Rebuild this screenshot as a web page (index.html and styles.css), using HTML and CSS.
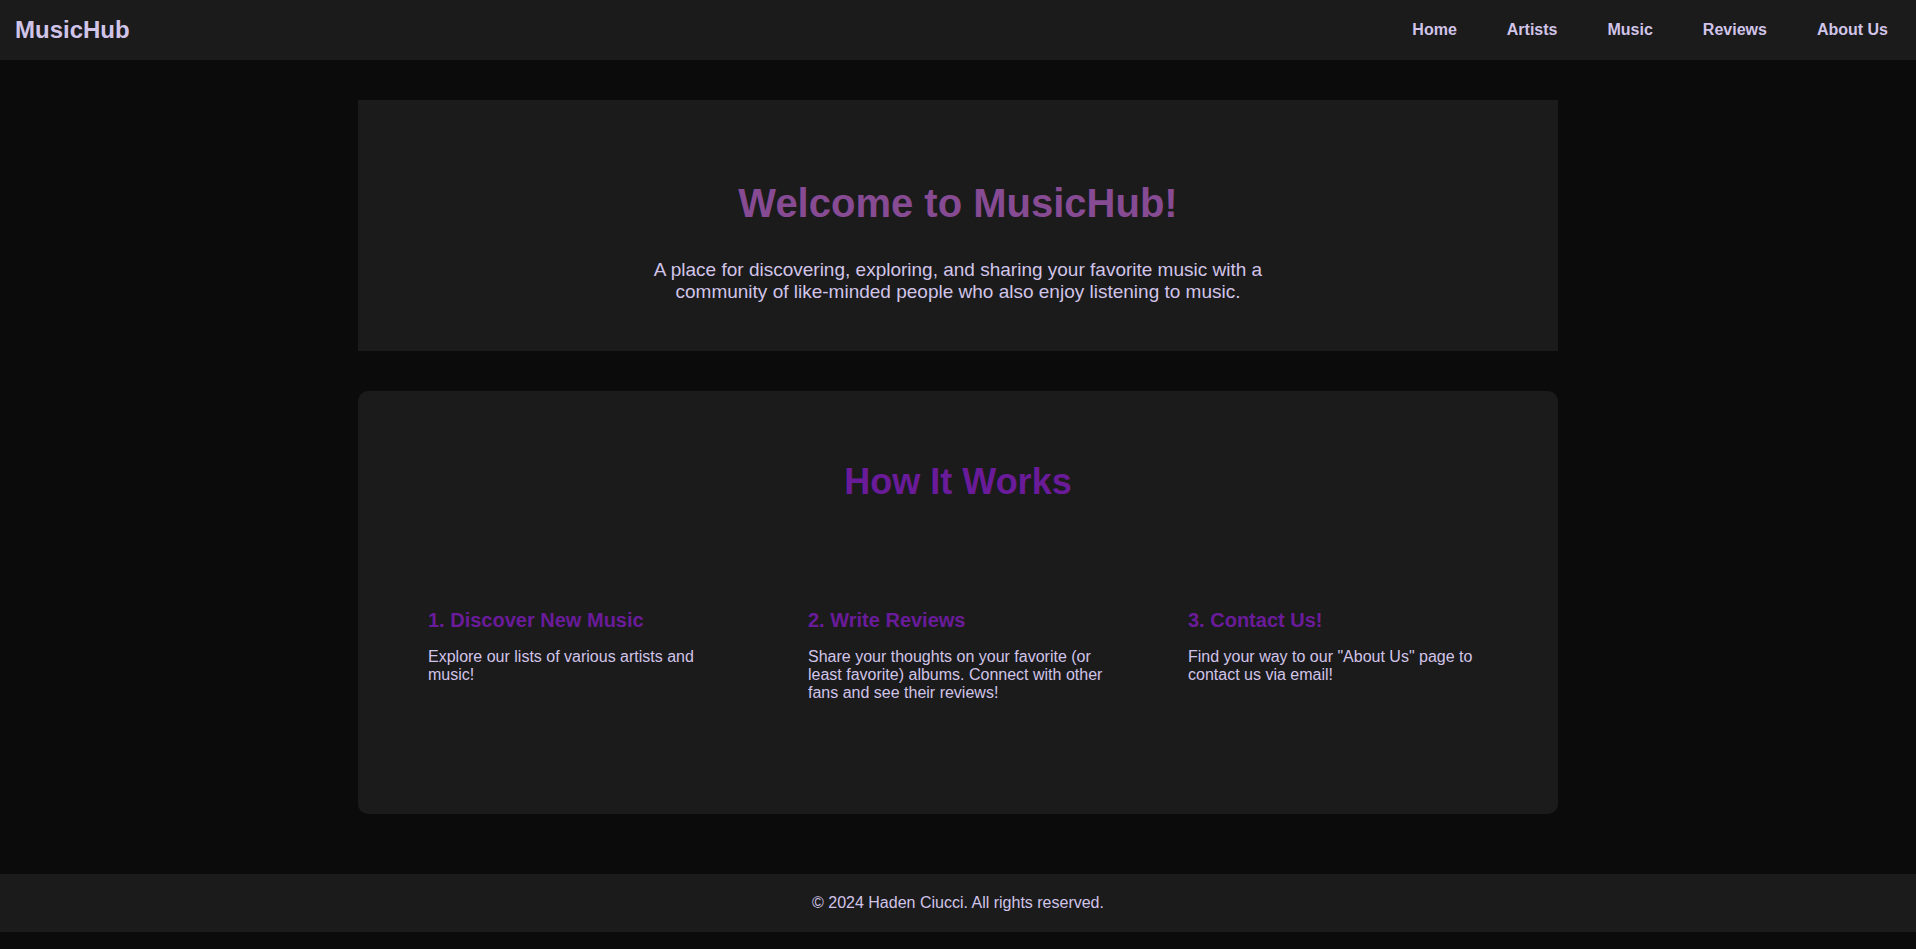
FILE: index.html
```html
<!DOCTYPE html>
<html lang="en">
<head>
<meta charset="utf-8">
<title>MusicHub</title>
<link rel="stylesheet" href="styles.css">
</head>
<body>
<header class="site-header">
  <div class="logo">MusicHub</div>
  <nav class="nav">
    <a href="#">Home</a>
    <a href="#">Artists</a>
    <a href="#">Music</a>
    <a href="#">Reviews</a>
    <a href="#">About Us</a>
  </nav>
</header>
<main class="main">
  <section class="hero">
    <h1>Welcome to MusicHub!</h1>
    <p>A place for discovering, exploring, and sharing your favorite music with a community of like-minded people who also enjoy listening to music.</p>
  </section>
  <section class="how">
    <h2>How It Works</h2>
    <div class="steps">
      <article class="step">
        <h3>1. Discover New Music</h3>
        <p>Explore our lists of various artists and music!</p>
      </article>
      <article class="step">
        <h3>2. Write Reviews</h3>
        <p>Share your thoughts on your favorite (or least favorite) albums. Connect with other fans and see their reviews!</p>
      </article>
      <article class="step">
        <h3>3. Contact Us!</h3>
        <p>Find your way to our "About Us" page to contact us via email!</p>
      </article>
    </div>
  </section>
</main>
<footer class="site-footer">
  <p>© 2024 Haden Ciucci. All rights reserved.</p>
</footer>
</body>
</html>
```
FILE: styles.css
```css
* { box-sizing: border-box; }
body {
  margin: 0;
  background: #0b0b0b;
  color: #d1c4e9;
  font-family: "Liberation Sans", Arial, sans-serif;
  font-size: 16px;
}
.site-header {
  display: flex;
  justify-content: space-between;
  align-items: center;
  padding: 16px 28px 16px 15px;
  background: #1b1b1b;
}
.logo { font-size: 24px; line-height: 28px; font-weight: bold; }
.nav { display: flex; gap: 50px; }
.nav a { color: inherit; font-weight: bold; text-decoration: none; }
.main {
  max-width: 1200px;
  margin: 40px auto 60px;
  display: flex;
  flex-direction: column;
  gap: 40px;
}
.hero {
  padding: 80px 40px 48px;
  background: #1b1b1b;
  text-align: center;
}
.hero h1 {
  margin: 0 0 33px;
  color: #864b93;
  font-size: 40px;
  line-height: 46px;
}
.hero p {
  max-width: 640px;
  margin: 0 auto;
  font-size: 19px;
  line-height: 22px;
}
.how {
  padding: 70px 50px 92px;
  background: #1b1b1b;
  border-radius: 10px;
}
.how h2 {
  margin: 0 0 87px;
  color: #6a1b9a;
  font-size: 36px;
  line-height: 41px;
  text-align: center;
}
.steps {
  display: grid;
  grid-template-columns: repeat(3, 1fr);
  gap: 40px;
}
.step { padding: 20px; }
.step h3 {
  margin: 0 0 16px;
  color: #6a1b9a;
  font-size: 20px;
  line-height: 23px;
}
.step p { margin: 0; line-height: 18px; }
.site-footer {
  padding: 20px;
  background: #1b1b1b;
  text-align: center;
}
.site-footer p { margin: 0; line-height: 18px; }
```
